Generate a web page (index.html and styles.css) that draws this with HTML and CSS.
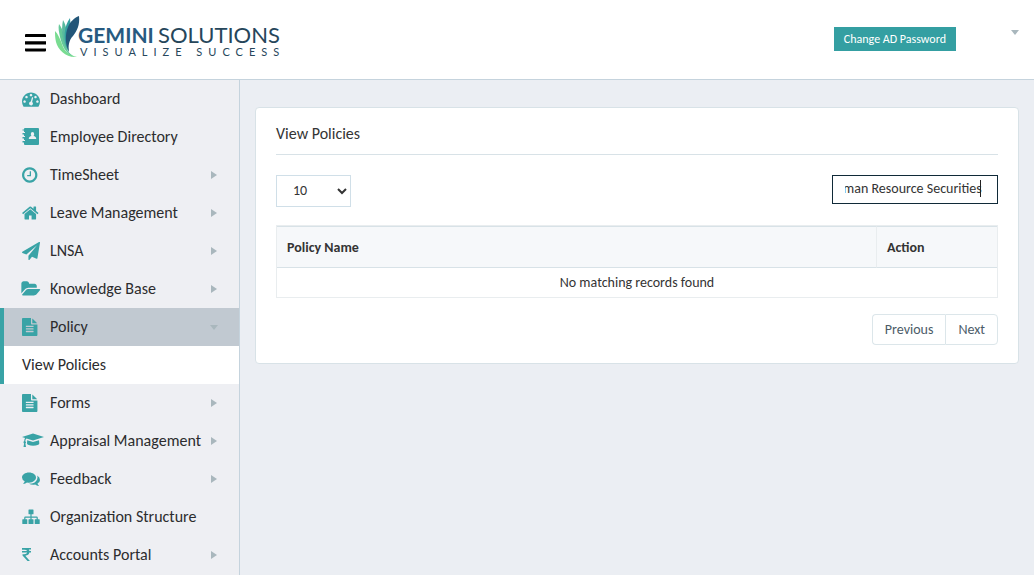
FILE: index.html
```html
<!DOCTYPE html>
<html lang="en">
<head>
<meta charset="utf-8">
<title>View Policies</title>
<link rel="stylesheet" href="styles.css">
</head>
<body>
<svg class="sprite" aria-hidden="true">
  <symbol id="i-file" viewBox="128 0 1792 1792"><path d="M1596 476q14 14 28 36h-472v-472q22 14 36 28zm-476 164h544v1056q0 40-28 68t-68 28h-1344q-40 0-68-28t-28-68v-1600q0-40 28-68t68-28h800v544q0 40 28 68t68 28zm160 736v-64q0-14-9-23t-23-9h-704q-14 0-23 9t-9 23v64q0 14 9 23t23 9h704q14 0 23-9t9-23zm0-256v-64q0-14-9-23t-23-9h-704q-14 0-23 9t-9 23v64q0 14 9 23t23 9h704q14 0 23-9t9-23zm0-256v-64q0-14-9-23t-23-9h-704q-14 0-23 9t-9 23v64q0 14 9 23t23 9h704q14 0 23-9t9-23z"/></symbol>
</svg>
<header class="topbar">
  <button class="menu-button" type="button" aria-label="Toggle menu"><svg viewBox="0 0 21 18" width="21" height="18"><path d="M1 0h19a1 1 0 0 1 1 1v2H0V1a1 1 0 0 1 1-1zM0 7.200h21v3.200H0zM0 14.500h21v2a1 1 0 0 1-1 1H1a1 1 0 0 1-1-1z"/></svg></button>
  <a class="logo" href="#" aria-label="Gemini Solutions">
    <svg viewBox="0 0 228 46" width="228" height="46">
      <path fill="#79dc91" d="M0 16C3 19 5 24 7 29C9 36 14 40 22 42C11 43 3 35 1 27C0 23 0 19 0 16z"/>
      <path fill="#65c99a" d="M4 9C9 15 9 24 11 31C12 36 15 39 18 41C10 38 7 30 5 22C4 17 3 13 4 9z"/>
      <path fill="#58b99e" d="M8 5C11 10 13 18 12 27L14 37C7 29 6 15 8 5z"/>
      <path fill="#339fa0" d="M15 3C16 9 15 16 13 23L12 33C8 24 9 11 15 3z"/>
      <path fill="#235678" d="M24 1C25 10 22 16 18 21C14 25 13 31 14 37C10 29 10 19 13 12C15 7 19 3 24 1z"/>
      <text class="logo-bold" x="23" y="28">GEMINI</text>
      <text class="logo-light" x="103" y="28">SOLUTIONS</text>
      <text class="logo-tag" x="25" y="41">VISUALIZE SUCCESS</text>
    </svg>
  </a>
  <button class="ad-button" type="button">Change AD Password</button>
  <button class="user-menu" type="button" aria-label="User menu"><span class="caret down"></span></button>
</header>
<div class="shell">
  <nav class="sidebar" aria-label="Main">
    <a class="item" href="#"><svg class="icon" viewBox="0 0 1792 1792"><path d="M384 1152q0-53-37.500-90.500t-90.500-37.500-90.500 37.500-37.500 90.500 37.500 90.500 90.500 37.500 90.500-37.500 37.500-90.500zm192-448q0-53-37.500-90.500t-90.500-37.500-90.500 37.500-37.500 90.500 37.500 90.500 90.500 37.500 90.500-37.500 37.500-90.500zm428 481l101-382q6-26-7.500-48.500t-38.500-29.500-48 6.500-30 39.500l-101 382q-60 5-107 43.500t-63 98.500q-20 77 20 146t117 89 146-20 89-117q16-60-6-117t-72-91zm660-33q0-53-37.500-90.500t-90.500-37.500-90.500 37.500-37.500 90.500 37.500 90.500 90.500 37.500 90.500-37.500 37.500-90.500zm-640-640q0-53-37.500-90.500t-90.500-37.500-90.500 37.500-37.500 90.500 37.500 90.500 90.500 37.500 90.500-37.500 37.500-90.500zm448 192q0-53-37.500-90.500t-90.500-37.500-90.500 37.500-37.500 90.500 37.500 90.500 90.500 37.500 90.500-37.500 37.500-90.500zm320 448q0 261-141 483-19 29-54 29h-1402q-35 0-54-29-141-221-141-483 0-182 71-348t191-286 286-191 348-71 348 71 286 191 191 286 71 348z"/></svg><span>Dashboard</span></a>
    <a class="item" href="#"><svg class="icon" viewBox="0 0 18 18"><path fill-rule="evenodd" d="M3 0h13q1 0 1 1v15q0 1-1 1H3q-1 0-1-1v-1.500H.500v-1.500H3v-1H2v-1.500H.500V9H3V8H2V6.500H.500V5H3V4H2V2.500H.500V1.500H2V1q0-1 1-1zM10.500 4q-1.700 0-1.700 2 0 1.300.8 2-2.800.4-2.800 3h7.400q0-2.600-2.800-3 .8-.7.8-2 0-2-1.700-2z"/></svg><span>Employee Directory</span></a>
    <a class="item" href="#"><svg class="icon" viewBox="128 0 1792 1792"><path d="M1024 544v448q0 14-9 23t-23 9h-320q-14 0-23-9t-9-23v-64q0-14 9-23t23-9h224v-352q0-14 9-23t23-9h64q14 0 23 9t9 23zm416 352q0-148-73-273t-198-198-273-73-273 73-198 198-73 273 73 273 198 198 273 73 273-73 198-198 73-273zm224 0q0 209-103 385.500t-279.500 279.500-385.500 103-385.500-103-279.500-279.500-103-385.500 103-385.500 279.500-279.500 385.500-103 385.500 103 279.500 279.500 103 385.500z"/></svg><span>TimeSheet</span><span class="caret right"></span></a>
    <a class="item" href="#"><svg class="icon" viewBox="70 0 1792 1792"><path d="M1472 992v480q0 26-19 45t-45 19h-384v-384h-256v384h-384q-26 0-45-19t-19-45v-480q0-1 .500-3t.500-3l575-474 575 474q1 2 1 6zm223-69l-62 74q-8 9-21 11h-3q-13 0-21-7l-692-577-692 577q-12 8-24 7-13-2-21-11l-62-74q-8-10-7-23.500t11-21.500l719-599q32-26 76-26t76 26l244 204v-195q0-14 9-23t23-9h192q14 0 23 9t9 23v408l219 182q10 8 11 21.500t-7 23.500z"/></svg><span>Leave Management</span><span class="caret right"></span></a>
    <a class="item" href="#"><svg class="icon" viewBox="0 0 1792 1792"><path d="M1764 11q33 24 27 64l-256 1536q-5 29-32 45-14 8-31 8-11 0-24-5l-453-185-242 295q-18 23-49 23-13 0-22-4-19-7-30.500-23.500t-11.500-36.500v-349l864-1059-1069 925-395-162q-37-14-40-55-2-40 32-59l1664-960q15-9 32-9 20 0 36 11z"/></svg><span>LNSA</span><span class="caret right"></span></a>
    <a class="item" href="#"><svg class="icon" viewBox="0 0 1792 1792"><path d="M1815 952q0 31-31 66l-336 396q-43 51-120.500 86.500t-143.500 35.500h-1088q-34 0-60.500-13t-26.500-43q0-31 31-66l336-396q43-51 120.500-86.500t143.500-35.500h1088q34 0 60.500 13t26.500 43zm-343-344v160h-832q-94 0-197 47.500t-164 119.500l-337 396-5 6q0-4-.500-12.500t-.500-12.500v-960q0-92 66-158t158-66h320q92 0 158 66t66 158v32h544q92 0 158 66t66 158z"/></svg><span>Knowledge Base</span><span class="caret right"></span></a>
    <div class="group">
      <a class="item active" href="#" aria-expanded="true"><svg class="icon"><use href="#i-file"/></svg><span>Policy</span><span class="caret down"></span></a>
      <a class="item sub" href="#" aria-current="page"><span>View Policies</span></a>
    </div>
    <a class="item" href="#"><svg class="icon"><use href="#i-file"/></svg><span>Forms</span><span class="caret right"></span></a>
    <a class="item" href="#"><svg class="icon" viewBox="0 0 18 18"><path d="M11 1.500L22 5 11 8.500 4.500 6.500Q3.400 7.300 3.300 9.200q.7.400.7 1.100 0 .7-.6 1.100L4 15H1.500l.6-3.600q-.6-.4-.6-1.100 0-.8.700-1.200.1-1.800.9-3L0 5zM5.200 8.200L11 10l6-1.800.3 3.300q-.4 2-6.200 2.200-5.600-.2-6.100-2.200z"/></svg><span>Appraisal Management</span><span class="caret right"></span></a>
    <a class="item" href="#"><svg class="icon" viewBox="0 0 18 18"><path d="M7 2.500c3.900 0 7 2.300 7 5.100s-3.100 5.100-7 5.100q-1 0-2-.2Q3.300 13.800 1.500 14q-.4-.2-.1-.6 1.100-1 1.300-2.100Q0 9.900 0 7.600c0-2.800 3.100-5.100 7-5.100zM15.200 5.500Q18 7.200 18 9.900q0 2-2.500 3.600.3 1 1.300 2 .2.400-.2.600-1.700-.1-3.500-1.500-3.500.6-6.100-.8 6.400-.2 8.100-4.400.8-2.200.1-3.900z"/></svg><span>Feedback</span><span class="caret right"></span></a>
    <a class="item" href="#"><svg class="icon" viewBox="0 0 18 18"><path d="M7 1.500h4q.5 0 .5.500v3.800q0 .5-.5.500H9.600v2.200h5q1.200 0 1.200 1.200v1.600h1.400q.5 0 .5.500v3.700q0 .5-.5.500h-4q-.5 0-.5-.5v-3.700q0-.5.5-.5h1.400V9.700h-5v1.600H11q.5 0 .5.500v3.700q0 .5-.5.500H7q-.5 0-.5-.5v-3.700q0-.5.5-.5h1.400V9.700h-5v1.600h1.400q.5 0 .5.500v3.700q0 .5-.5.500h-4q-.5 0-.5-.5v-3.700q0-.5.500-.5h1.400V9.700q0-1.200 1.200-1.200h5V6.300H7q-.5 0-.5-.5V2q0-.5.500-.5z"/></svg><span>Organization Structure</span></a>
    <a class="item" href="#"><svg class="icon" viewBox="0 0 18 18"><path d="M0 2h9v1.500H6.800q.5.700.6 1.500H9v1.500H7.400Q6.900 9.300 3.300 9.700L7.900 15H5.500L.500 9.500V8.200h1.700q2.600 0 3-1.700H0V5h5.100Q4.500 3.800 2.500 3.800H0z"/></svg><span>Accounts Portal</span><span class="caret right"></span></a>
  </nav>
  <main class="main">
    <section class="panel">
      <h1 class="title">View Policies</h1>
      <div class="tools">
        <select class="length" aria-label="Records per page"><option>10</option><option>25</option><option>50</option></select>
        <div class="search-box"><input class="search" id="search" type="text" aria-label="Search" value="Human Resource Securities" autofocus></div>
      </div>
      <table class="grid">
        <thead><tr><th scope="col">Policy Name</th><th class="action" scope="col">Action</th></tr></thead>
        <tbody><tr><td colspan="2">No matching records found</td></tr></tbody>
      </table>
      <div class="pager"><button type="button">Previous</button><button type="button">Next</button></div>
    </section>
  </main>
</div>
<script src="script.js"></script>
</body>
</html>
```
FILE: styles.css
```css
* { box-sizing: border-box; }
body {
  margin: 0;
  min-height: 100vh;
  display: flex;
  flex-direction: column;
  background: #ebeef3;
  color: #343434;
  font: 14px/20px Calibri, Carlito, Lato, sans-serif;
}
button, input, select { font: inherit; color: inherit; }
.sprite { position: absolute; width: 0; height: 0; }
.topbar {
  display: flex;
  align-items: flex-start;
  height: 80px;
  padding: 0 15px 0 25px;
  background: #fff;
  border-bottom: 1px solid #c5d3dd;
}
.menu-button { margin: 34px 9px 0 0; padding: 0; border: 0; background: none; line-height: 0; }
.logo { margin-top: 15px; margin-right: auto; line-height: 0; }
.logo-bold { font: 700 21px Lato, sans-serif; fill: #275a80; }
.logo-light { font: 400 22px Lato, sans-serif; fill: #26465b; }
.logo-tag { font: 400 11px Lato, sans-serif; letter-spacing: 6px; fill: #26465b; }
.ad-button {
  height: 24px;
  margin-top: 27px;
  padding: 0 10px;
  border: 0;
  background: #349fa2;
  color: #fff;
  font-size: 12px;
}
.user-menu { margin: 30px 0 0 55px; padding: 0; border: 0; background: none; line-height: 0; }
.caret { display: block; border: 0 solid transparent; }
.caret.right { border-width: 4px 0 4px 6px; border-left-color: #a9b7bd; }
.caret.down { border-width: 5px 4px 0; border-top-color: #a9b7bd; }

.shell { flex: 1; display: flex; }
.sidebar { width: 240px; flex: none; background: #eeeff3; border-right: 1px solid #c5d3dd; }
.item {
  display: flex;
  align-items: center;
  height: 38px;
  padding: 0 22px;
  color: #2c2c2e;
  font-size: 16px;
  text-decoration: none;
}
.icon { width: 18px; height: 18px; margin-right: 10px; overflow: visible; fill: #39a3a6; flex: none; }
.item .caret { margin-left: auto; }
.group { border-left: 4px solid #39a3a6; }
.group .item { padding: 0 21px 0 18px; }
.item.active { background: #c1c9d1; }
.item.sub { background: #fff; }

.main { flex: 1; padding: 27px 15px; }
.panel { padding: 16px 20px 18px; background: #fff; border: 1px solid #d8e2e7; border-radius: 4px; }
.title {
  margin: 0 0 20px;
  padding-bottom: 10px;
  border-bottom: 1px solid #d8e2e7;
  font-size: 16px;
  font-weight: 400;
}
.tools { display: flex; justify-content: space-between; align-items: flex-start; margin-bottom: 18px; }
.length { width: 75px; height: 32px; padding: 0 0 2px 12px; border: 1px solid #d0dfe8; background: #fff; }
.search-box { position: relative; display: flex; }
.search {
  width: 166px;
  height: 29px;
  padding: 0 15px 2px 12px;
  border: 1px solid #102a38;
  outline: 0;
  caret-color: transparent;
}
/* Steady text cursor at the end of the focused search term */
.search-box:focus-within::after {
  content: "";
  position: absolute;
  top: 5px;
  right: 17px;
  width: 1px;
  height: 17px;
  background: #222;
}
.grid { width: 100%; border-collapse: separate; border-spacing: 0; border: 1px solid #e9edef; }
.grid th {
  height: 42px;
  padding: 2px 10px 0;
  background: #f6f8fa;
  border-top: 1px solid #d8e2e7;
  border-bottom: 1px solid #d8e2e7;
  text-align: left;
  font-weight: 700;
}
.grid .action { width: 121px; border-left: 1px solid #e9edef; }
.grid td { height: 29px; padding: 0; text-align: center; }
.pager { display: flex; justify-content: flex-end; margin-top: 16px; }
.pager button { height: 31px; padding: 0 12px; border: 1px solid #dce6ea; background: #fff; color: #4c5c68; }
.pager button:first-child { border-radius: 4px 0 0 4px; border-right: 0; }
.pager button:last-child { border-radius: 0 4px 4px 0; }
```
FILE: script.js
```js
const search = document.getElementById("search");
search.focus();
search.setSelectionRange(search.value.length, search.value.length);
search.scrollLeft = search.scrollWidth;
```
